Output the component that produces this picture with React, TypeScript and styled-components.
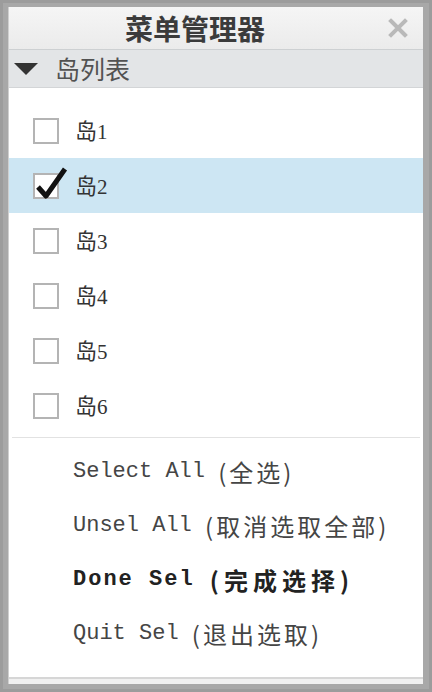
import React from "react";
import styled, { createGlobalStyle } from "styled-components";

const Global = createGlobalStyle`
  html, body { margin: 0; padding: 0; background: #a9a9a9; }
  * { box-sizing: border-box; }
`;

const Frame = styled.div`
  width: 432px;
  height: 692px;
  background: #a8a8a8;
  padding: 7px 9px 8px 8px;
  box-shadow: inset 3px 0 0 #9c9c9c, inset -3px 0 0 #9c9c9c, inset 0 3px 0 #9c9c9c, inset 0 -3px 0 #9c9c9c;
  display: flex;
`;

const Panel = styled.div`
  flex: 1;
  display: flex;
  flex-direction: column;
  background: #ffffff;
  border-left: 1px solid #cfcfcf;
  font-family: "Noto Sans CJK SC", "Noto Sans", sans-serif;
`;

const TitleBar = styled.div`
  height: 43px;
  display: flex;
  align-items: center;
  background: linear-gradient(#f5f5f5, #ebebeb);
  border-bottom: 1px solid #cdd0d2;
`;

const Title = styled.div`
  flex: 1;
  text-align: center;
  font-size: 28px;
  font-weight: 700;
  color: #3b3b3b;
  line-height: 1;
`;

const Close = styled.div`
  width: 42px;
  padding-right: 8px;
  display: flex;
  justify-content: center;
  align-items: center;
`;

const Header = styled.div`
  height: 38px;
  display: flex;
  align-items: center;
  padding-left: 5px;
  background: #e3e5e7;
  border-bottom: 1px solid #d3d5d7;
  color: #525252;
  font-size: 25px;
  line-height: 1;
  gap: 15px;
`;

const List = styled.div`
  padding-top: 15px;
  display: flex;
  flex-direction: column;
`;

const Row = styled.div<{ $selected?: boolean }>`
  height: 55px;
  display: flex;
  align-items: center;
  padding-left: 24px;
  background: ${(p) => (p.$selected ? "#cde6f3" : "transparent")};
  font-size: 22px;
  color: #333;
`;

const Box = styled.div`
  position: relative;
  width: 26px;
  height: 26px;
  border: 2px solid #b4b4b4;
  background: #fff;
  margin-right: 16px;
  flex-shrink: 0;
`;

const Check = styled.svg`
  position: absolute;
  left: 0px;
  top: -12px;
`;

const Label = styled.span`
  font-family: "Noto Sans CJK SC", sans-serif;
  line-height: 1;
`;

const Num = styled.span`
  font-family: "Liberation Serif", serif;
  font-size: 21px;
`;

const Separator = styled.div`
  margin: 4px 3px 0;
  height: 1px;
  background: #e2e2e2;
`;

const Menu = styled.div`
  padding-top: 6px;
  display: flex;
  flex-direction: column;
`;

const MenuItem = styled.div<{ $bold?: boolean }>`
  height: 54px;
  display: flex;
  align-items: center;
  padding-left: 64px;
  font-family: "Liberation Mono", "Noto Sans CJK SC", monospace;
  font-size: 22px;
  white-space: pre;
  font-weight: ${(p) => (p.$bold ? 700 : 400)};
  color: ${(p) => (p.$bold ? "#222" : "#454545")};
  letter-spacing: ${(p) => (p.$bold ? "2px" : "0")};
`;

const Cjk = styled.span<{ $bold?: boolean }>`
  font-family: "Noto Sans CJK SC", sans-serif;
  font-size: 24px;
  letter-spacing: ${(p) => (p.$bold ? "5px" : "3px")};
`;

const Spacer = styled.div`
  flex: 1;
`;

const Footer = styled.div`
  height: 7px;
  border-top: 2px solid #d6d6d6;
  background: #f0f0f0;
`;

const islands = [1, 2, 3, 4, 5, 6];

const menu: { en: string; zh: string; bold?: boolean }[] = [
  { en: "Select All ", zh: "(全选)" },
  { en: "Unsel All ", zh: "(取消选取全部)" },
  { en: "Done Sel ", zh: "(完成选择)", bold: true },
  { en: "Quit Sel ", zh: "(退出选取)" },
];

export default function App() {
  return (
    <>
      <Global />
      <Frame>
        <Panel>
          <TitleBar>
            <Title>菜单管理器</Title>
            <Close>
              <svg width="20" height="20" viewBox="0 0 20 20">
                <path d="M3 3 L17 17 M17 3 L3 17" stroke="#b9b9b9" strokeWidth="4" strokeLinecap="square" />
              </svg>
            </Close>
          </TitleBar>
          <Header>
            <svg width="26" height="14" viewBox="0 0 26 14">
              <polygon points="0,1 24,1 12,13" fill="#333" />
            </svg>
            <span>岛列表</span>
          </Header>
          <List>
            {islands.map((n) => (
              <Row key={n} $selected={n === 2}>
                <Box>
                  {n === 2 && (
                    <Check width="36" height="38" viewBox="0 0 36 38">
                      <path d="M3 24 L11 33 L30 6" fill="none" stroke="#111" strokeWidth="5" strokeLinejoin="round" />
                    </Check>
                  )}
                </Box>
                <Label>
                  岛<Num>{n}</Num>
                </Label>
              </Row>
            ))}
          </List>
          <Separator />
          <Menu>
            {menu.map((m) => (
              <MenuItem key={m.en} $bold={m.bold}>
                {m.en}
                <Cjk $bold={m.bold}>{m.zh}</Cjk>
              </MenuItem>
            ))}
          </Menu>
          <Spacer />
          <Footer />
        </Panel>
      </Frame>
    </>
  );
}
